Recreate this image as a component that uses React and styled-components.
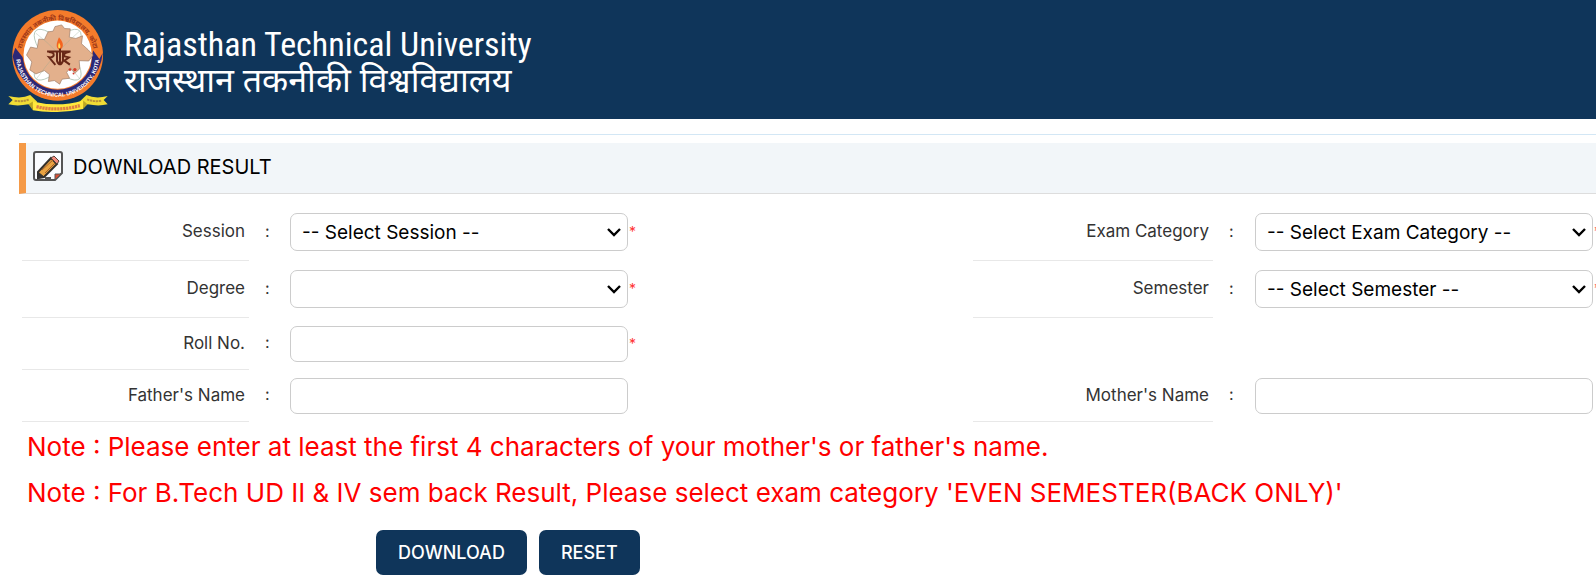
import React from "react";
import styled, { createGlobalStyle } from "styled-components";

const GlobalStyle = createGlobalStyle`
  * {
    box-sizing: border-box;
  }

  body {
    margin: 0;
    overflow-x: hidden;
    background: #fff;
    color: #333;
    font-family: Inter, "Open Sans", sans-serif;
    font-size: 16px;
  }
`;

const Header = styled.header`
  display: flex;
  align-items: flex-start;
  gap: 16px;
  height: 119px;
  padding: 8px;
  background: #0f355a;
  color: #fff;
`;

const Brand = styled.div`
  display: flex;
  flex-direction: column;
  padding-top: 14px;
  white-space: nowrap;
`;

const BrandName = styled.span`
  font-family: "Liberation Sans Narrow", "Roboto Condensed", Lato, sans-serif;
  font-size: 34px;
  line-height: 44px;
`;

const BrandNameHindi = styled.span`
  font-family: "Noto Sans Devanagari", "Noto Sans", sans-serif;
  font-size: 34px;
  line-height: 36px;
`;

const Main = styled.main`
  margin: 15px 0 0 19px;
  padding-top: 8px;
  border-top: 1px solid #d3e7f5;
`;

const TitleBar = styled.div`
  display: flex;
  align-items: center;
  gap: 10px;
  height: 51px;
  padding: 0 0 4px 7px;
  border-left: 7px solid #f59a47;
  border-bottom: 1px solid #ddd;
  background: #f2f6f9;
`;

const Title = styled.h1`
  margin: 0;
  padding-top: 2px;
  color: #000;
  font-size: 20px;
  font-weight: 400;
  line-height: 30px;
`;

const Form = styled.form`
  padding: 10px 0 0 3px;
`;

const FormRow = styled.div`
  display: grid;
  grid-template-columns: 227fr 41fr 683fr 240fr 42fr 341fr;
`;

const FieldLabel = styled.label`
  display: flex;
  align-items: center;
  justify-content: flex-end;
  padding: 0 4px 2px 0;
  border-bottom: 1px solid #e8e8e8;
  font-size: 17px;
  white-space: nowrap;
`;

const Colon = styled.span`
  display: flex;
  align-items: center;
  padding: 0 0 4px 16px;
`;

const FieldCell = styled.div`
  display: flex;
  align-items: center;
  gap: 1px;
  min-width: 0;
  padding: ${({ $tall }) => ($tall ? "9px 0 10px" : "8px 0")};
`;

const controlStyle = `
  flex: none;
  width: 338px;
  border: 1px solid #ccc;
  border-radius: 7px;
  background: #fff;
  color: #000;
  font-family: inherit;
  font-size: 19px;
`;

const SelectWrap = styled.div`
  position: relative;
  flex: none;

  svg {
    position: absolute;
    top: 15px;
    right: 7px;
    pointer-events: none;
  }
`;

const SelectBox = styled.select`
  ${controlStyle}
  display: block;
  height: 38px;
  padding: 0 28px 0 11px;
  appearance: none;
`;

const TextBox = styled.input`
  ${controlStyle}
  height: 36px;
  padding: 0 11px;
`;

const Required = styled.span`
  color: #f33;
  font-size: 14px;
  line-height: 14px;
`;

const Notes = styled.div`
  padding: 2px 0 0 5px;
`;

const Note = styled.p`
  margin: 0;
  color: #f00;
  font-size: 26px;
  line-height: 46px;
`;

const Actions = styled.div`
  display: flex;
  gap: 12px;
  padding: 14px 0 13px 354px;
`;

const ActionButton = styled.button`
  height: 45px;
  padding: 0 22px;
  border: 0;
  border-radius: 7px;
  background: #0f355a;
  color: #fff;
  font-family: inherit;
  font-size: 18px;
  font-weight: 500;
`;

const Emblem = () => (
  <svg width="100" height="104" viewBox="24 24 302 314" aria-hidden="true">
    <defs>
      <path id="arc-top" d="M63 172A111 111 0 0 1 285 172" />
      <path id="arc-bottom" d="M48 166A126 126 0 0 0 300 166" />
    </defs>
    <circle cx="174" cy="167" r="137" fill="#f47b2b" />
    <path d="M38 170L46 144 68 172 74 200A106 106 0 0 0 274 200L281 152 300 178 310 160A137 137 0 0 1 38 170Z" fill="#2b2878" />
    <circle cx="174" cy="165" r="103" fill="#fff" />
    <g fill="none" stroke="#9db6a4" strokeWidth="2">
      <ellipse cx="174" cy="165" rx="98" ry="36" transform="rotate(48 174 165)" />
      <ellipse cx="174" cy="165" rx="98" ry="36" transform="rotate(-48 174 165)" />
    </g>
    <path
      d="M80 166L92 142 112 146 117 118 134 119 145 96 160 94 166 80 186 75 195 86 212 87 209 112 229 116 249 108 246 132 266 150 281 166 268 184 239 183 241 207 227 220 211 207 201 218 210 236 187 239 180 254 164 243 146 246 149 225 134 213 108 223 90 211 96 187Z"
      fill="#e3b08c"
      stroke="#9c7b66"
      strokeWidth="2"
    />
    <g fill="none" stroke="#8fa58c" strokeWidth="1">
      <path d="M108 100Q174 150 240 237M240 94Q170 153 110 238" />
    </g>
    <path d="M178 112C196 132 191 145 179 151 167 143 170 130 178 112Z" fill="#f4641f" />
    <path d="M178 128C184 138 183 143 179 148 174 143 175 137 178 128Z" fill="#ffe05a" />
    <path
      d="M142 155H213M147 157C170 157 164 176 148 173L167 196M172 155V184Q181 204 190 184V155M181 146V197M210 156Q188 160 195 170L208 173 194 183 211 195"
      fill="none"
      stroke="#672717"
      strokeWidth="6"
    />
    <g fill="#d53b29">
      <circle cx="211" cy="210" r="4" />
      <circle cx="226" cy="210" r="5" />
      <circle cx="222" cy="222" r="3" />
    </g>
    <text fill="#9c3517" fontFamily="Noto Sans Devanagari, sans-serif" fontSize="20" fontWeight="700">
      <textPath href="#arc-top" startOffset="50%" textAnchor="middle">
        राजस्थान तकनीकी विश्वविद्यालय, कोटा
      </textPath>
    </text>
    <text fill="#fff" fontFamily="Liberation Sans, sans-serif" fontSize="17" fontWeight="700">
      <textPath href="#arc-bottom" startOffset="50%" textAnchor="middle">
        RAJASTHAN TECHNICAL UNIVERSITY, KOTA
      </textPath>
    </text>
    <path d="M25 290Q65 300 91 287L112 307 101 326 86 315Q51 322 25 315L38 302Z" fill="#f0dc35" />
    <path d="M325 290Q288 300 261 287L240 307 249 326 264 315Q299 322 325 315L313 302Z" fill="#f0dc35" />
    <path d="M99 306Q175 325 251 303V329Q175 345 99 333Z" fill="#ffe83c" />
    <path d="M99 306V333L86 315ZM251 303V329L264 315Z" fill="#bda724" />
    <g fill="none" stroke="#b9923a" strokeWidth="6" strokeDasharray="7 2">
      <path d="M44 304Q68 308 88 300M263 300Q284 308 307 304" />
      <path d="M110 322Q175 337 241 319" stroke="#df8044" strokeWidth="10" />
    </g>
  </svg>
);

const EditIcon = () => (
  <svg width="30" height="30" viewBox="0 0 30 30" aria-hidden="true">
    <path d="M3 1H27Q29 1 29 3V22L22 29H3Q1 29 1 27V3Q1 1 3 1Z" fill="#fafcff" stroke="#555" strokeWidth="2" />
    <path d="M22 29V23H28Z" fill="#d84e35" stroke="#555" />
    <path d="M5 21L18 7 24 13 11 26 5 27Z" fill="#e9a443" stroke="#34302b" strokeWidth="2" />
    <path d="M18 7L21 5 26 10 24 13Z" fill="#f28b7d" stroke="#55413a" />
    <path d="M5 21L11 26 5 27Z" fill="#333" stroke="#333" />
    <path d="M9 19L20 9M12 22L22 12" fill="none" stroke="#a9622b" />
    <path d="M12 27H18" stroke="#555" strokeWidth="2" />
  </svg>
);

const Chevron = () => (
  <svg width="14" height="9" viewBox="0 0 14 9" aria-hidden="true">
    <path d="M1 1L7 7 13 1" fill="none" stroke="#000" strokeWidth="2.4" />
  </svg>
);

const Field = ({ id, label, placeholder, type = "text", required }) => (
  <>
    <FieldLabel htmlFor={id}>{label}</FieldLabel>
    <Colon>:</Colon>
    <FieldCell $tall={type === "select"}>
      {type === "select" ? (
        <SelectWrap>
          <SelectBox id={id} name={id} defaultValue="">
            <option value="">{placeholder}</option>
          </SelectBox>
          <Chevron />
        </SelectWrap>
      ) : (
        <TextBox id={id} name={id} type="text" />
      )}
      {required ? <Required>*</Required> : null}
    </FieldCell>
  </>
);

const App = () => (
  <>
    <GlobalStyle />
    <Header>
      <Emblem />
      <Brand>
        <BrandName>Rajasthan Technical University</BrandName>
        <BrandNameHindi lang="hi">राजस्थान तकनीकी विश्वविद्यालय</BrandNameHindi>
      </Brand>
    </Header>
    <Main>
      <TitleBar>
        <EditIcon />
        <Title>DOWNLOAD RESULT</Title>
      </TitleBar>
      <Form onSubmit={(e) => e.preventDefault()}>
        <FormRow>
          <Field id="session" label="Session" type="select" placeholder="-- Select Session --" required />
          <Field
            id="examCategory"
            label="Exam Category"
            type="select"
            placeholder="-- Select Exam Category --"
            required
          />
        </FormRow>
        <FormRow>
          <Field id="degree" label="Degree" type="select" placeholder="" required />
          <Field id="semester" label="Semester" type="select" placeholder="-- Select Semester --" required />
        </FormRow>
        <FormRow>
          <Field id="rollNo" label="Roll No." required />
        </FormRow>
        <FormRow>
          <Field id="fatherName" label="Father's Name" />
          <Field id="motherName" label="Mother's Name" />
        </FormRow>
        <Notes>
          <Note>Note : Please enter at least the first 4 characters of your mother's or father's name.</Note>
          <Note>
            Note : For B.Tech UD II &amp; IV sem back Result, Please select exam category 'EVEN SEMESTER(BACK ONLY)'
          </Note>
        </Notes>
        <Actions>
          <ActionButton type="submit">DOWNLOAD</ActionButton>
          <ActionButton type="reset">RESET</ActionButton>
        </Actions>
      </Form>
    </Main>
  </>
);

export default App;
